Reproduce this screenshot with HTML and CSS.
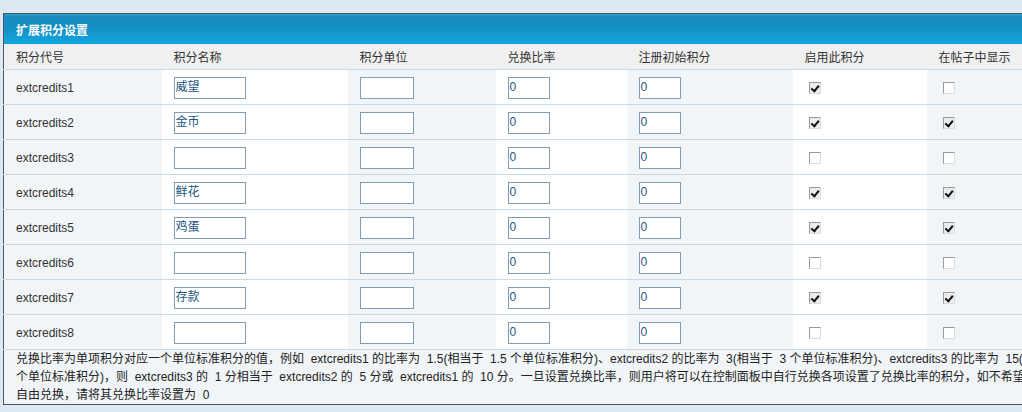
FILE: index.html
```html
<!DOCTYPE html>
<html lang="zh-CN">
<head>
<meta charset="utf-8">
<title>扩展积分设置</title>
<link rel="stylesheet" href="styles.css">
</head>
<body>
<div class="page">
  <table class="panel">
    <colgroup>
      <col class="c1"><col class="c2"><col class="c3"><col class="c4"><col class="c5"><col class="c6"><col class="c7">
    </colgroup>
    <thead>
      <tr class="title"><th colspan="7">扩展积分设置</th></tr>
      <tr class="head">
        <td>积分代号</td><td>积分名称</td><td>积分单位</td><td>兑换比率</td><td>注册初始积分</td><td>启用此积分</td><td>在帖子中显示</td>
      </tr>
    </thead>
    <tbody>
      <tr><td>extcredits1</td><td><span class="inp w72">威望</span></td><td><span class="inp w54"></span></td><td><span class="inp w42">0</span></td><td><span class="inp w42">0</span></td><td><span class="cb on"></span></td><td><span class="cb"></span></td></tr>
      <tr><td>extcredits2</td><td><span class="inp w72">金币</span></td><td><span class="inp w54"></span></td><td><span class="inp w42">0</span></td><td><span class="inp w42">0</span></td><td><span class="cb on"></span></td><td><span class="cb on"></span></td></tr>
      <tr><td>extcredits3</td><td><span class="inp w72"></span></td><td><span class="inp w54"></span></td><td><span class="inp w42">0</span></td><td><span class="inp w42">0</span></td><td><span class="cb"></span></td><td><span class="cb"></span></td></tr>
      <tr><td>extcredits4</td><td><span class="inp w72">鲜花</span></td><td><span class="inp w54"></span></td><td><span class="inp w42">0</span></td><td><span class="inp w42">0</span></td><td><span class="cb on"></span></td><td><span class="cb on"></span></td></tr>
      <tr><td>extcredits5</td><td><span class="inp w72">鸡蛋</span></td><td><span class="inp w54"></span></td><td><span class="inp w42">0</span></td><td><span class="inp w42">0</span></td><td><span class="cb on"></span></td><td><span class="cb on"></span></td></tr>
      <tr><td>extcredits6</td><td><span class="inp w72"></span></td><td><span class="inp w54"></span></td><td><span class="inp w42">0</span></td><td><span class="inp w42">0</span></td><td><span class="cb"></span></td><td><span class="cb"></span></td></tr>
      <tr><td>extcredits7</td><td><span class="inp w72">存款</span></td><td><span class="inp w54"></span></td><td><span class="inp w42">0</span></td><td><span class="inp w42">0</span></td><td><span class="cb on"></span></td><td><span class="cb on"></span></td></tr>
      <tr><td>extcredits8</td><td><span class="inp w72"></span></td><td><span class="inp w54"></span></td><td><span class="inp w42">0</span></td><td><span class="inp w42">0</span></td><td><span class="cb"></span></td><td><span class="cb"></span></td></tr>
    </tbody>
    <tfoot>
      <tr class="note"><td colspan="7">兑换比率为单项积分对应一个单位标准积分的值，例如&nbsp; extcredits1 的比率为&nbsp; 1.5(相当于&nbsp; 1.5 个单位标准积分)、extcredits2 的比率为&nbsp; 3(相当于&nbsp; 3 个单位标准积分)、extcredits3 的比率为&nbsp; 15(相当于 15<br>个单位标准积分)，则&nbsp; extcredits3 的&nbsp; 1 分相当于&nbsp; extcredits2 的&nbsp; 5 分或&nbsp; extcredits1 的&nbsp; 10 分。一旦设置兑换比率，则用户将可以在控制面板中自行兑换各项设置了兑换比率的积分，如不希望实现积分<br>自由兑换，请将其兑换比率设置为&nbsp; 0</td></tr>
    </tfoot>
  </table>
</div>
</body>
</html>
```

FILE: styles.css
```css
html { overflow: hidden; }
body {
  margin: 0;
  background: #dee8f2;
  font-family: "Liberation Sans", "Noto Sans CJK SC", sans-serif;
  font-size: 12px;
  color: #333;
}
.page {
  padding: 13px 0 0 3px;
  width: 1100px;
}
.panel {
  border-collapse: collapse;
  table-layout: fixed;
  width: 1080px;
  border-top: 1px solid #4a5763;
  border-left: 1px solid #4a5763;
  border-bottom: 1px solid #4a5763;
}
.c1 { width: 158px; }
.c2 { width: 186px; }
.c3 { width: 148px; }
.c4 { width: 131px; }
.c5 { width: 166px; }
.c6 { width: 134px; }
.c7 { width: 157px; }

.title th {
  height: 30px;
  padding: 0 12px;
  text-align: left;
  color: #fff;
  font-weight: bold;
  font-size: 12px;
  background: linear-gradient(#3aa0cc 0, #1a8abc 2px, #1590c6 45%, #12a6de 100%);
}
.head td {
  height: 24px;
  padding: 0 12px 1px;
  background: #f0f0f0;
  color: #333;
  border-bottom: 1px solid #c9dbe8;
}
tbody tr { height: 35px; }
tbody td {
  padding: 1px 12px 0;
  border-bottom: 1px solid #c9dbe8;
  background: #fff;
  vertical-align: middle;
}
tbody td:nth-child(odd) { background: #f1f5f8; }

.inp {
  display: block;
  box-sizing: border-box;
  height: 22px;
  border: 1px solid #7f9db9;
  background: #fff;
  padding: 0 1px;
  line-height: 19px;
  color: #1b557f;
  font-size: 12px;
}
.w72 { width: 72px; }
.w54 { width: 54px; }
.w42 { width: 42px; }

.cb {
  display: block;
  box-sizing: border-box;
  width: 12px;
  height: 12px;
  margin-left: 4px;
  border: 1px solid #9a9a9a;
  border-right-color: #dcdcdc;
  border-bottom-color: #dcdcdc;
  background: #fff;
  position: relative;
}
.cb.on { background: #ececec; }
.cb.on::after {
  content: "";
  position: absolute;
  left: 2px;
  top: 1px;
  width: 3px;
  height: 6px;
  border-right: 2px solid #111;
  border-bottom: 2px solid #111;
  transform: rotate(40deg);
  transform-origin: 60% 60%;
}

.note td {
  padding: 0 12px;
  line-height: 18px;
  background: #f1f5f8;
  color: #222;
  white-space: nowrap;
  border-top: 1px solid #dde6ee;
}
```
